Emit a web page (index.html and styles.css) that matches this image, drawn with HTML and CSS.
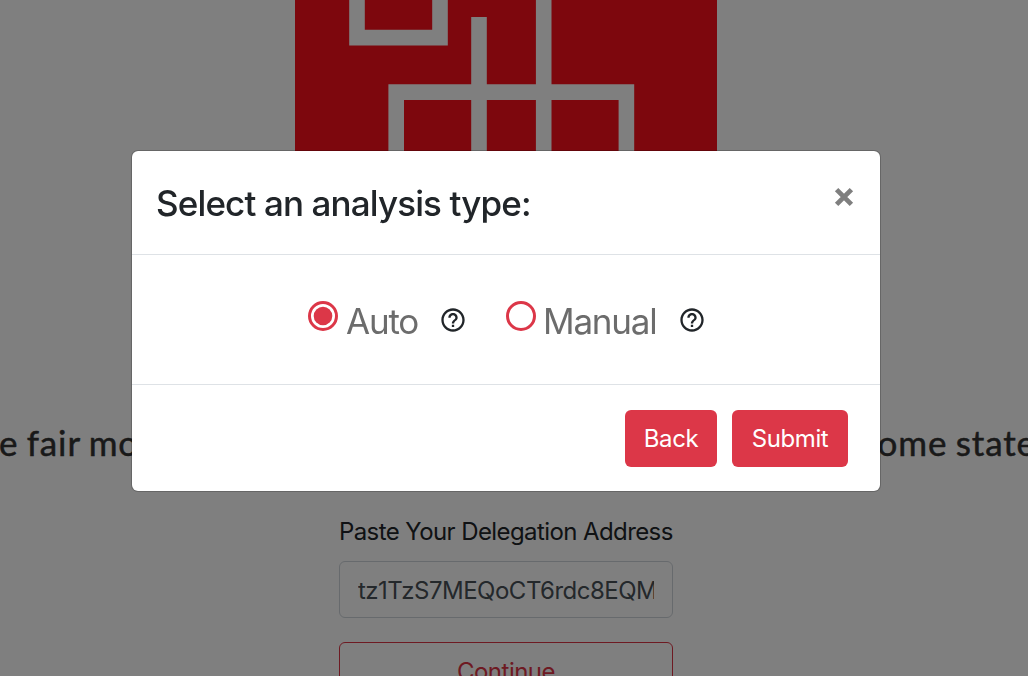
FILE: index.html
```html
<!DOCTYPE html>
<html lang="en">
<head>
<meta charset="utf-8">
<title>Select an analysis type</title>
<link rel="stylesheet" href="styles.css">
</head>
<body>
<main class="page">
  <svg class="logo" viewBox="0 0 422 400">
    <rect width="422" height="400" fill="#fb0e1a"/>
    <g fill="none" stroke="#fff" stroke-width="15.6">
      <path d="M62 -10V37.6H145V-10"/>
      <path d="M184 17V400M248.700 -10V400"/>
      <path d="M101.200 400V92.100H331.400V400"/>
    </g>
  </svg>
  <div class="tagline"><span>e fair mo</span><span>ome state</span></div>
  <div class="form">
    <label class="form-label" for="address">Paste Your Delegation Address</label>
    <input class="address" id="address" value="tz1TzS7MEQoCT6rdc8EQMXYZ">
    <button class="continue">Continue</button>
  </div>
</main>
<div class="backdrop"></div>
<section class="modal" role="dialog">
  <header class="modal-header">
    <h1 class="title">Select an analysis type:</h1>
    <button class="close" aria-label="Close"><svg width="20" height="20" viewBox="0 0 20 20"><path d="M2.600 2.600L17.400 17.400M17.400 2.600L2.600 17.400" stroke="#7f7f7f" stroke-width="4.800"/></svg></button>
  </header>
  <div class="modal-body">
    <div class="option">
      <svg class="radio" width="30" height="30" viewBox="0 0 30 30"><circle cx="15" cy="15" r="13.500" fill="none" stroke="#dc3748" stroke-width="3"/><circle cx="15" cy="15" r="9.300" fill="#dc3748"/></svg>
      <span class="option-label auto">Auto</span>
      <svg class="help" width="28" height="28" viewBox="0 0 24 24"><path fill="#212529" d="M11 18h2v-2h-2v2zm1-16C6.480 2 2 6.480 2 12s4.480 10 10 10 10-4.480 10-10S17.520 2 12 2zm0 18c-4.410 0-8-3.590-8-8s3.590-8 8-8 8 3.590 8 8-3.590 8-8 8zm0-14c-2.210 0-4 1.790-4 4h2c0-1.100.9-2 2-2s2 .9 2 2c0 2-3 1.750-3 5h2c0-2.250 3-2.500 3-5 0-2.210-1.790-4-4-4z"/></svg>
    </div>
    <div class="option">
      <svg class="radio" width="30" height="30" viewBox="0 0 30 30"><circle cx="15" cy="15" r="13.500" fill="none" stroke="#dc3748" stroke-width="3"/></svg>
      <span class="option-label manual">Manual</span>
      <svg class="help" width="28" height="28" viewBox="0 0 24 24"><path fill="#212529" d="M11 18h2v-2h-2v2zm1-16C6.480 2 2 6.480 2 12s4.480 10 10 10 10-4.480 10-10S17.520 2 12 2zm0 18c-4.410 0-8-3.590-8-8s3.590-8 8-8 8 3.590 8 8-3.590 8-8 8zm0-14c-2.210 0-4 1.790-4 4h2c0-1.100.9-2 2-2s2 .9 2 2c0 2-3 1.750-3 5h2c0-2.250 3-2.500 3-5 0-2.210-1.790-4-4-4z"/></svg>
    </div>
  </div>
  <footer class="modal-footer">
    <button class="btn back">Back</button>
    <button class="btn submit">Submit</button>
  </footer>
</section>
</body>
</html>
```
FILE: styles.css
```css
* { box-sizing: border-box; }
body {
  margin: 0;
  height: 676px;
  overflow: hidden;
  background: #fff;
  color: #212529;
  font-family: Inter, "Liberation Sans", sans-serif;
}
button, input { font: inherit; margin: 0; }
.page {
  height: 676px;
  overflow: hidden;
  display: flex;
  flex-direction: column;
}
.logo { flex: none; width: 422px; height: 400px; margin-left: 295px; }
.tagline {
  flex: none;
  display: flex;
  justify-content: space-between;
  height: 86px;
  line-height: 85px;
  margin: 0 -8px 0 -1px;
  color: #333;
  font-family: Lato, sans-serif;
  font-size: 35px;
  letter-spacing: 0.9px;
  word-spacing: -1.5px;
  -webkit-text-stroke: 0.5px #333;
  white-space: nowrap;
}
.form {
  flex: none;
  display: flex;
  flex-direction: column;
  width: 334px;
  margin: 29px 0 0 339px;
}
.form-label {
  height: 46px;
  line-height: 34px;
  font-size: 24px;
  white-space: nowrap;
  letter-spacing: -0.59px;
}
.address {
  height: 57px;
  padding: 2px 18px 0;
  border: 1px solid #ced4da;
  border-radius: 6px;
  background: #fff;
  color: #495057;
  font-size: 24px;
  letter-spacing: -0.5px;
}
.continue {
  height: 57px;
  margin-top: 24px;
  padding: 2px 0 0;
  border: 1px solid #dc3545;
  border-radius: 6px;
  background: #fff;
  color: #dc3545;
  font-size: 24px;
  letter-spacing: -0.5px;
}
.backdrop { position: fixed; inset: 0; background: rgba(0, 0, 0, .5); }
.modal {
  position: fixed;
  left: 131px;
  top: 150px;
  width: 750px;
  height: 342px;
  display: flex;
  flex-direction: column;
  border: 1px solid rgba(0, 0, 0, .2);
  border-radius: 7px;
  background: #fff;
  background-clip: padding-box;
}
.modal-header {
  display: flex;
  justify-content: space-between;
  height: 104px;
  padding: 0 26px 0 24px;
  border-bottom: 1px solid #dee2e6;
}
.title {
  margin: 0;
  font-size: 35px;
  font-weight: 500;
  line-height: 104px;
  letter-spacing: -0.87px;
  white-space: nowrap;
}
.close { align-self: flex-start; margin-top: 36px; padding: 0; border: 0; background: none; line-height: 0; }
.modal-body { flex: 1; display: flex; gap: 39px; padding: 41px 0 0 176px; }
.option { display: flex; align-items: flex-start; }
.radio { margin-top: 5px; }
.option-label {
  margin-left: 8px;
  line-height: 51px;
  font-size: 35px;
  letter-spacing: -1.2px;
  color: #6c6c6c;
}
.auto { width: 93px; }
.manual { width: 134px; margin-left: 7px; margin-right: 1px; }
.help { margin-top: 10px; }
.modal-footer {
  display: flex;
  justify-content: flex-end;
  gap: 15px;
  height: 107px;
  padding: 25px 32px 0 0;
  border-top: 1px solid #dee2e6;
}
.btn {
  height: 57px;
  padding: 0;
  border: 0;
  border-radius: 6px;
  background: #dc3748;
  color: #fff;
  font-size: 24px;
  letter-spacing: -0.4px;
}
.back { width: 92px; }
.submit { width: 116px; }
```
